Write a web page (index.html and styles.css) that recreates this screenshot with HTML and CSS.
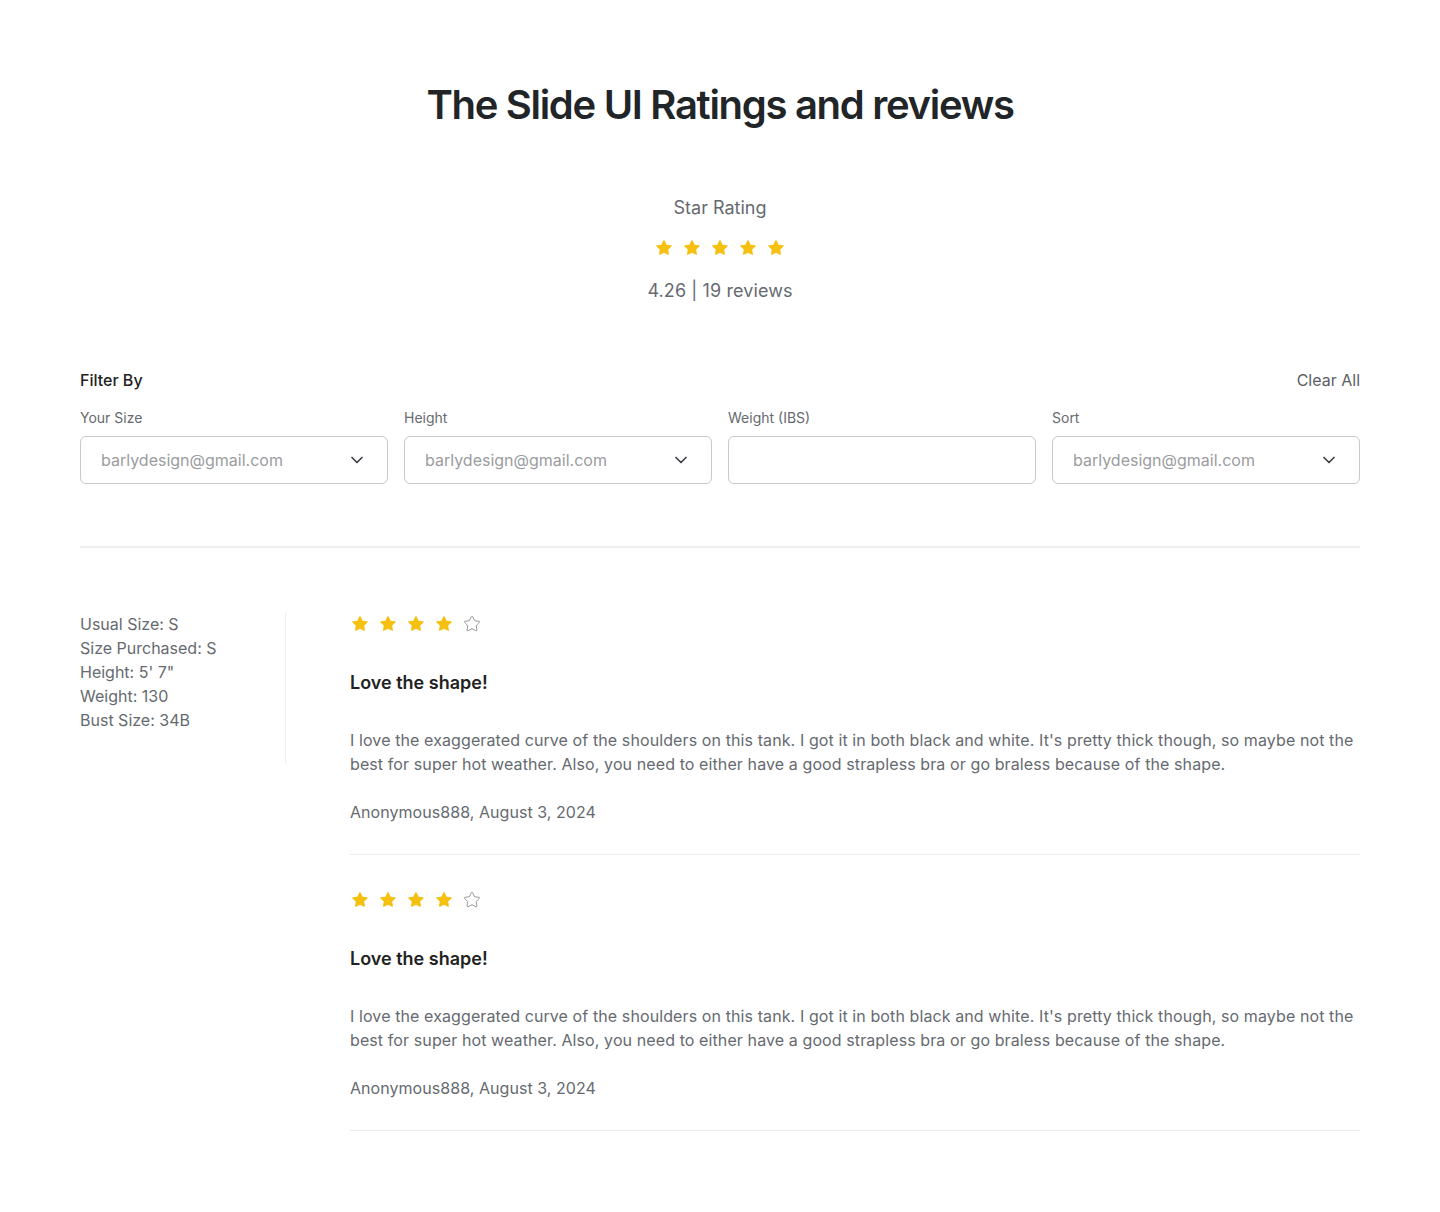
FILE: index.html
```html
<!DOCTYPE html>
<html lang="en">
<head>
<meta charset="utf-8">
<title>The Slide UI Ratings and reviews</title>
<link rel="stylesheet" href="styles.css">
</head>
<body>
<svg width="0" height="0" class="defs" aria-hidden="true">
  <defs>
    <path id="star" d="M12 2.6c.3 0 .6.2.7.5l2.4 5 5.4.7c.7.1.9.9.4 1.3l-3.9 3.8.9 5.4c.1.7-.6 1.2-1.2.9L12 17.6l-4.8 2.6c-.6.3-1.3-.2-1.2-.9l.9-5.4-3.9-3.8c-.5-.4-.3-1.2.4-1.3l5.4-.7 2.4-5c.2-.3.5-.5.8-.5z"/>
  </defs>
</svg>
<main class="page">
  <h1 class="title">The Slide UI Ratings and reviews</h1>

  <section class="summary">
    <div class="summary-label">Star Rating</div>
    <div class="stars stars-lg">
      <svg viewBox="0 0 24 24" class="star on"><use href="#star"/></svg>
      <svg viewBox="0 0 24 24" class="star on"><use href="#star"/></svg>
      <svg viewBox="0 0 24 24" class="star on"><use href="#star"/></svg>
      <svg viewBox="0 0 24 24" class="star on"><use href="#star"/></svg>
      <svg viewBox="0 0 24 24" class="star on"><use href="#star"/></svg>
    </div>
    <div class="summary-count">4.26 | 19 reviews</div>
  </section>

  <section class="filters">
    <div class="filters-head">
      <span class="filters-title">Filter By</span>
      <span class="clear-all">Clear All</span>
    </div>
    <div class="filters-grid">
      <div class="field">
        <label class="field-label">Your Size</label>
        <div class="select">
          <span class="placeholder">barlydesign@gmail.com</span>
          <svg class="chev" viewBox="0 0 24 24"><path d="M6 9l6 6 6-6"/></svg>
        </div>
      </div>
      <div class="field">
        <label class="field-label">Height</label>
        <div class="select">
          <span class="placeholder">barlydesign@gmail.com</span>
          <svg class="chev" viewBox="0 0 24 24"><path d="M6 9l6 6 6-6"/></svg>
        </div>
      </div>
      <div class="field">
        <label class="field-label">Weight (IBS)</label>
        <div class="select"></div>
      </div>
      <div class="field">
        <label class="field-label">Sort</label>
        <div class="select">
          <span class="placeholder">barlydesign@gmail.com</span>
          <svg class="chev" viewBox="0 0 24 24"><path d="M6 9l6 6 6-6"/></svg>
        </div>
      </div>
    </div>
  </section>

  <hr class="divider">

  <section class="review-block">
    <aside class="reviewer">
      <div>Usual Size: S</div>
      <div>Size Purchased: S</div>
      <div>Height: 5' 7"</div>
      <div>Weight: 130</div>
      <div>Bust Size: 34B</div>
    </aside>
    <div class="reviews">
      <article class="review">
        <div class="stars">
          <svg viewBox="0 0 24 24" class="star on"><use href="#star"/></svg>
          <svg viewBox="0 0 24 24" class="star on"><use href="#star"/></svg>
          <svg viewBox="0 0 24 24" class="star on"><use href="#star"/></svg>
          <svg viewBox="0 0 24 24" class="star on"><use href="#star"/></svg>
          <svg viewBox="0 0 24 24" class="star off"><use href="#star"/></svg>
        </div>
        <h3 class="review-title">Love the shape!</h3>
        <p class="review-body">I love the exaggerated curve of the shoulders on this tank. I got it in both black and white. It's pretty thick though, so maybe not the best for super hot weather. Also, you need to either have a good strapless bra or go braless because of the shape.</p>
        <div class="review-meta">Anonymous888, August 3, 2024</div>
      </article>
      <article class="review">
        <div class="stars">
          <svg viewBox="0 0 24 24" class="star on"><use href="#star"/></svg>
          <svg viewBox="0 0 24 24" class="star on"><use href="#star"/></svg>
          <svg viewBox="0 0 24 24" class="star on"><use href="#star"/></svg>
          <svg viewBox="0 0 24 24" class="star on"><use href="#star"/></svg>
          <svg viewBox="0 0 24 24" class="star off"><use href="#star"/></svg>
        </div>
        <h3 class="review-title">Love the shape!</h3>
        <p class="review-body">I love the exaggerated curve of the shoulders on this tank. I got it in both black and white. It's pretty thick though, so maybe not the best for super hot weather. Also, you need to either have a good strapless bra or go braless because of the shape.</p>
        <div class="review-meta">Anonymous888, August 3, 2024</div>
      </article>
    </div>
  </section>
</main>
</body>
</html>
```
FILE: styles.css
```css
* { box-sizing: border-box; }
html, body { margin: 0; padding: 0; background: #fff; }
body {
  font-family: Inter, "Noto Sans", "Liberation Sans", sans-serif;
  color: #222;
}
.defs { position: absolute; }
.page {
  width: 1280px;
  margin: 0 auto;
  padding: 80px 0 80px;
}
.title {
  margin: 0;
  text-align: center;
  font-size: 40px;
  line-height: 50px;
  font-weight: 600;
  letter-spacing: -1.3px;
  color: #222528;
}
.summary {
  margin-top: 64px;
  display: flex;
  flex-direction: column;
  align-items: center;
}
.summary-label {
  font-size: 18px;
  line-height: 28px;
  color: #666a70;
}
.stars {
  display: flex;
  gap: 8px;
}
.stars-lg { margin-top: 16px; }
.star { width: 20px; height: 20px; display: block; }
.star.on { fill: #f5c010; }
.star.off { fill: none; stroke: #9a9a9a; stroke-width: 1.2; }
.summary-count {
  margin-top: 19px;
  font-size: 18px;
  line-height: 28px;
  color: #666a70;
  letter-spacing: 0.1px;
}
.filters { margin-top: 63px; }
.filters-head {
  display: flex;
  justify-content: space-between;
  align-items: center;
  font-size: 16px;
  line-height: 24px;
}
.filters-title { color: #222; font-weight: 500; }
.clear-all { color: #5c6066; }
.filters-grid {
  margin-top: 16px;
  display: grid;
  grid-template-columns: repeat(4, 1fr);
  gap: 16px;
}
.field { display: flex; flex-direction: column; }
.field-label {
  font-size: 14px;
  line-height: 20px;
  color: #666a70;
  margin-bottom: 8px;
}
.select {
  height: 48px;
  border: 1px solid #c6c8cc;
  border-radius: 6px;
  padding: 0 20px;
  display: flex;
  align-items: center;
  justify-content: space-between;
}
.placeholder {
  font-size: 16px;
  color: #9a9ca0;
}
.chev {
  width: 20px;
  height: 20px;
  fill: none;
  stroke: #3a3d42;
  stroke-width: 2;
  stroke-linecap: round;
  stroke-linejoin: round;
}
.divider {
  margin: 62px 0 0;
  border: 0;
  height: 2px;
  background: #f0f0f1;
}
.review-block {
  margin-top: 64px;
  display: flex;
  align-items: flex-start;
}
.reviewer {
  width: 206px;
  flex: none;
  padding-bottom: 32px;
  border-right: 1px solid #f0f0f1;
  font-size: 16px;
  line-height: 24px;
  color: #666a70;
}
.reviews {
  flex: 1;
  margin-left: 64px;
}
.review {
  padding-top: 2px;
  padding-bottom: 30px;
  border-bottom: 1px solid #ebebec;
}
.review + .review { padding-top: 35px; }
.review-title {
  margin: 35px 0 0;
  font-size: 18px;
  line-height: 28px;
  font-weight: 600;
  color: #222;
}
.review-body {
  margin: 31px 0 0;
  font-size: 16px;
  line-height: 24px;
  color: #666a70;
  letter-spacing: 0.1px;
}
.review-meta {
  margin-top: 24px;
  font-size: 16px;
  line-height: 24px;
  color: #666a70;
  letter-spacing: 0.05px;
}
```
